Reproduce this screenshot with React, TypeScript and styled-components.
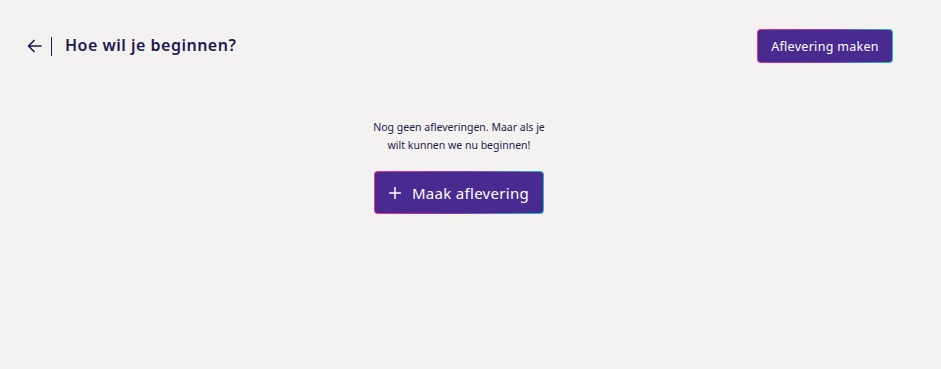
import styled, { createGlobalStyle } from 'styled-components';

const GlobalStyle = createGlobalStyle`
  html, body {
    margin: 0;
    padding: 0;
    background: #f3f2f0;
    font-family: 'Noto Sans', 'Lato', sans-serif;
  }
`;

const Page = styled.div`
  width: 941px;
  height: 369px;
  background: #f3f2f0;
  display: flex;
  flex-direction: column;
`;

const Header = styled.div`
  display: flex;
  justify-content: space-between;
  align-items: center;
  padding: 29px 48px 0 27px;
`;

const TitleGroup = styled.div`
  display: flex;
  align-items: center;
  height: 34px;
  margin-top: -3px;
`;

const BackButton = styled.button`
  background: none;
  border: none;
  padding: 0;
  display: flex;
  align-items: center;
  color: #1d1a4f;
  cursor: pointer;
  margin-top: 3px;
`;

const Divider = styled.span`
  width: 1px;
  height: 19px;
  background: #1d1a4f;
  margin: 3px 13px 0 9px;
`;

const Title = styled.h1`
  margin: 0;
  font-size: 16px;
  font-weight: 600;
  color: #1d1a4f;
  letter-spacing: 0.5px;
`;

const GradientButton = styled.button<{ large?: boolean }>`
  border: none;
  padding: 1px;
  border-radius: 4px;
  background: linear-gradient(100deg, #f0317f 0%, #8a3bb0 50%, #22c3b8 100%);
  cursor: pointer;
  font-family: inherit;
  width: ${({ large }) => (large ? '170px' : '136px')};
  height: ${({ large }) => (large ? '43px' : '34px')};
`;

const ButtonInner = styled.span<{ large?: boolean }>`
  display: flex;
  align-items: center;
  justify-content: center;
  gap: 11px;
  width: 100%;
  height: 100%;
  box-sizing: border-box;
  border-radius: 3px;
  background: #482a91;
  color: #ffffff;
  font-size: ${({ large }) => (large ? '15px' : '12.5px')};
  letter-spacing: 0.3px;
`;

const Content = styled.div`
  display: flex;
  flex-direction: column;
  align-items: center;
  margin-top: 55px;
  margin-left: -23px;
`;

const EmptyText = styled.p`
  margin: 0 0 17px;
  width: 186px;
  text-align: center;
  font-size: 10.5px;
  line-height: 18px;
  color: #1d1a4f;
`;

const Plus = () => (
  <svg width="12" height="12" viewBox="0 0 12 12" fill="none">
    <path d="M6 0.5v11M0.5 6h11" stroke="#fff" strokeWidth="1.5" strokeLinecap="round" />
  </svg>
);

const ArrowLeft = () => (
  <svg width="15" height="14" viewBox="0 0 15 14" fill="none">
    <path d="M14 7H1.5M7 1.5L1.5 7l5.5 5.5" stroke="#1d1a4f" strokeWidth="1.7" strokeLinecap="round" strokeLinejoin="round" />
  </svg>
);

export default function App() {
  return (
    <Page>
      <GlobalStyle />
      <Header>
        <TitleGroup>
          <BackButton>
            <ArrowLeft />
          </BackButton>
          <Divider />
          <Title>Hoe wil je beginnen?</Title>
        </TitleGroup>
        <GradientButton>
          <ButtonInner>Aflevering maken</ButtonInner>
        </GradientButton>
      </Header>
      <Content>
        <EmptyText>Nog geen afleveringen. Maar als je wilt kunnen we nu beginnen!</EmptyText>
        <GradientButton large>
          <ButtonInner large>
            <Plus />
            Maak aflevering
          </ButtonInner>
        </GradientButton>
      </Content>
    </Page>
  );
}
